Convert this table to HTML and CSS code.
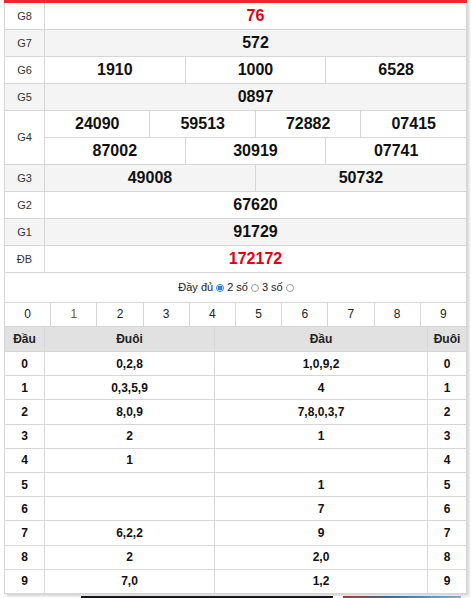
FILE: index.html
```html
<!DOCTYPE html>
<html lang="vi">
<head>
<meta charset="utf-8">
<title>Kết quả xổ số</title>
<link rel="stylesheet" href="styles.css">
</head>
<body>
<div class="wrap">
  <table class="prizes">
    <colgroup>
      <col class="c-label">
      <col><col><col><col><col><col><col><col><col><col><col><col>
    </colgroup>
    <tbody>
      <tr class="first"><td class="lbl">G8</td><td colspan="12" class="num red">76</td></tr>
      <tr class="alt"><td class="lbl">G7</td><td colspan="12" class="num">572</td></tr>
      <tr><td class="lbl">G6</td><td colspan="4" class="num">1910</td><td colspan="4" class="num">1000</td><td colspan="4" class="num">6528</td></tr>
      <tr class="alt"><td class="lbl">G5</td><td colspan="12" class="num">0897</td></tr>
      <tr><td class="lbl" rowspan="2">G4</td><td colspan="3" class="num">24090</td><td colspan="3" class="num">59513</td><td colspan="3" class="num">72882</td><td colspan="3" class="num">07415</td></tr>
      <tr><td colspan="4" class="num">87002</td><td colspan="4" class="num">30919</td><td colspan="4" class="num">07741</td></tr>
      <tr class="alt"><td class="lbl">G3</td><td colspan="6" class="num">49008</td><td colspan="6" class="num">50732</td></tr>
      <tr><td class="lbl">G2</td><td colspan="12" class="num">67620</td></tr>
      <tr class="alt"><td class="lbl">G1</td><td colspan="12" class="num">91729</td></tr>
      <tr><td class="lbl">ĐB</td><td colspan="12" class="num red">172172</td></tr>
    </tbody>
  </table>

  <div class="options">
    <span>Đầy đủ</span><span class="radio on"></span><span>2 số</span><span class="radio"></span><span>3 số</span><span class="radio"></span>
  </div>

  <table class="digits">
    <tr>
      <td>0</td><td class="gold">1</td><td>2</td><td>3</td><td>4</td><td>5</td><td>6</td><td>7</td><td>8</td><td>9</td>
    </tr>
  </table>

  <table class="loto">
    <colgroup>
      <col class="c1"><col class="c2"><col class="c3"><col class="c4">
    </colgroup>
    <thead>
      <tr><th>Đầu</th><th>Đuôi</th><th>Đầu</th><th>Đuôi</th></tr>
    </thead>
    <tbody>
      <tr><td>0</td><td>0,2,8</td><td>1,0,9,2</td><td>0</td></tr>
      <tr><td>1</td><td>0,3,5,9</td><td>4</td><td>1</td></tr>
      <tr><td>2</td><td>8,0,9</td><td>7,8,0,3,7</td><td>2</td></tr>
      <tr><td>3</td><td>2</td><td>1</td><td>3</td></tr>
      <tr><td>4</td><td>1</td><td></td><td>4</td></tr>
      <tr><td>5</td><td></td><td>1</td><td>5</td></tr>
      <tr><td>6</td><td></td><td>7</td><td>6</td></tr>
      <tr><td>7</td><td>6,2,2</td><td>9</td><td>7</td></tr>
      <tr><td>8</td><td>2</td><td>2,0</td><td>8</td></tr>
      <tr><td>9</td><td>7,0</td><td>1,2</td><td>9</td></tr>
    </tbody>
  </table>
</div>
<div class="promo"><span class="p-dark"></span><span class="p-gap"></span><span class="p-color"></span></div>
</body>
</html>
```
FILE: styles.css
```css
html, body {
  margin: 0;
  padding: 0;
  background: #fff;
}
body {
  font-family: "Liberation Sans", Arial, sans-serif;
  color: #111;
}
.wrap {
  margin-left: 4px;
  width: 463px;
  border-top: 3px solid #f2262e;
  box-shadow: 2px 2px 3px rgba(0, 0, 0, 0.18);
  background: #fff;
}
table {
  border-collapse: collapse;
  table-layout: fixed;
  width: 100%;
}
td, th {
  border: 1px solid #d6d6d6;
  padding: 0;
  text-align: center;
  vertical-align: middle;
}
.prizes .c-label { width: 40px; }
.prizes tr { height: 27px; }
.prizes tr.first { height: 26px; }
.prizes tr.alt td { background: #f4f4f4; }
.prizes tr:first-child td { border-top: none; }
.lbl {
  font-size: 11px;
  color: #333;
}
.num {
  font-size: 16px;
  font-weight: bold;
  color: #111;
}
.num.red { color: #e3000f; }

.options {
  height: 29px;
  display: flex;
  align-items: center;
  justify-content: center;
  gap: 2px;
  font-size: 11px;
  color: #222;
  border-left: 1px solid #d6d6d6;
  border-right: 1px solid #d6d6d6;
  padding-left: 2px;
}
.radio {
  display: inline-block;
  width: 8px;
  height: 8px;
  box-sizing: border-box;
  border: 1px solid #9a9a9a;
  border-radius: 50%;
  background: #fff;
  margin: 1px 1px 0 1px;
}
.radio.on {
  border-color: #2f7fe0;
  background: radial-gradient(circle, #2f7fe0 0 2.3px, #fff 2.6px);
}
.digits tr { height: 24px; }
.digits td {
  font-size: 12px;
  color: #222;
}
.digits td.gold { color: #7a5a00; }

.loto .c1 { width: 40px; }
.loto .c2 { width: 170px; }
.loto .c4 { width: 39px; }
.loto thead tr { height: 25px; }
.loto th {
  background: #e1e1e1;
  font-size: 12px;
  font-weight: bold;
  color: #222;
  border-top: none;
}
.loto tbody tr { height: 24.2px; }
.loto td {
  font-size: 12px;
  font-weight: bold;
  color: #111;
}
.promo {
  display: flex;
  margin-top: 2px;
  height: 4px;
  margin-left: 81px;
}
.p-dark { width: 252px; background: #101828; }
.p-gap { width: 10px; background: #fff; }
.p-color { width: 118px; background: linear-gradient(90deg, #b23a1c, #3a6a9a 40%, #7fb0d0); }
```
